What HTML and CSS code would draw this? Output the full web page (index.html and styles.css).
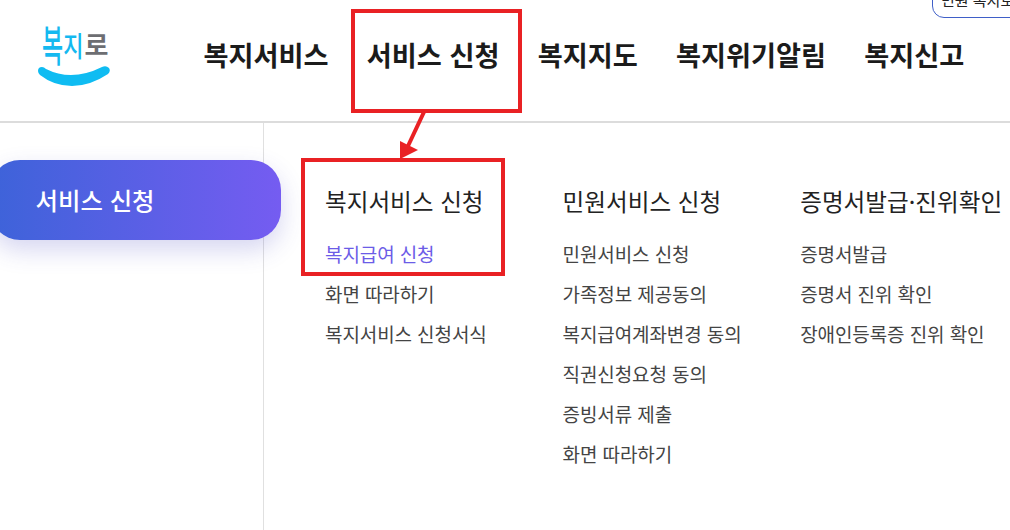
FILE: index.html
```html
<!DOCTYPE html>
<html lang="ko">
<head>
<meta charset="utf-8">
<title>복지로</title>
<link rel="stylesheet" href="styles.css">
</head>
<body>
<div class="page">
  <header class="header">
    <a class="logo">
      <span class="logo-text"><span class="logo-a">복</span><span class="logo-b">지</span><span class="logo-c">로</span></span>
      <svg class="logo-smile" width="76" height="22" viewBox="0 0 76 22"><path d="M2 5Q2 1 6 1Q8 1 10 3Q36 16 66 1Q70 -1 73 2Q75 5 72 8Q54 20 36 20Q18 20 4 9Q2 7 2 5Z" fill="#0fbcf2"/></svg>
    </a>
    <nav class="gnb">
      <a>복지서비스</a><a>서비스 신청</a><a>복지지도</a><a>복지위기알림</a><a>복지신고</a>
    </nav>
    <div class="top-btn">민원 복지로</div>
  </header>
  <main class="body">
    <aside class="side">
      <div class="pill">서비스 신청</div>
    </aside>
    <section class="cols">
      <div class="col">
        <h3>복지서비스 신청</h3>
        <ul><li class="on">복지급여 신청</li><li>화면 따라하기</li><li>복지서비스 신청서식</li></ul>
      </div>
      <div class="col">
        <h3>민원서비스 신청</h3>
        <ul><li>민원서비스 신청</li><li>가족정보 제공동의</li><li>복지급여계좌변경 동의</li><li>직권신청요청 동의</li><li>증빙서류 제출</li><li>화면 따라하기</li></ul>
      </div>
      <div class="col">
        <h3>증명서발급·진위확인</h3>
        <ul><li>증명서발급</li><li>증명서 진위 확인</li><li>장애인등록증 진위 확인</li></ul>
      </div>
    </section>
  </main>
  <div class="mark mark-nav"></div>
  <div class="mark mark-sub"></div>
  <svg class="mark-arrow" width="40" height="50" viewBox="0 0 40 50"><path d="M33 0L17 34" stroke="#e92124" stroke-width="4" fill="none"/><path d="M9 47L9 29L27 38Z" fill="#e92124"/></svg>
</div>
</body>
</html>
```
FILE: styles.css
```css
* { box-sizing: border-box; }
html, body { margin: 0; padding: 0; background: #fff; }
body { font-family: "Noto Sans CJK KR", "Noto Sans", sans-serif; color: #222; overflow: hidden; }
.page { position: relative; width: 1010px; height: 530px; overflow: hidden; }
.header { position: relative; display: flex; height: 123px; border-bottom: 2px solid #dcdcdc; }
.logo { position: relative; display: block; width: 203.5px; flex: none; }
.logo-text { position: absolute; left: 42px; top: 22px; display: flex; align-items: center; height: 44px; white-space: nowrap; font-weight: 500; }
.logo-a { color: #14b9f0; font-size: 23px; line-height: 44px; transform: translateY(-1px) scaleY(1.9); }
.logo-b { color: #14b9f0; font-size: 22px; line-height: 44px; transform: scaleY(1.3); }
.logo-c { color: #6d6e72; font-size: 26px; font-weight: 700; line-height: 44px; margin-left: 1px; }
.logo-smile { position: absolute; left: 36px; top: 66px; }
.gnb { display: flex; gap: 38.2px; height: 108px; align-items: center; }
.gnb a { font-size: 27.2px; font-weight: 700; color: #1b1b1b; white-space: nowrap; }
.top-btn { position: absolute; left: 932px; top: -18px; width: 100px; height: 36px; border: 1px solid #3f5fc8; border-radius: 12px; font-size: 15px; line-height: 33px; text-align: left; padding-left: 8px; white-space: nowrap; }
.body { display: flex; height: 407px; }
.side { width: 264px; flex: none; border-right: 1px solid #e0e0e0; padding-top: 37px; }
.pill { position: relative; width: 291px; height: 80px; margin-left: -10px; border-radius: 30px; padding-left: 45.5px; line-height: 80px; background: linear-gradient(90deg, #3d63d9, #755cf1); color: #fff; font-size: 24.4px; font-weight: 500; box-shadow: 0 10px 24px rgba(70, 70, 190, .22); }
.cols { display: flex; padding: 58px 0 0 61px; }
.col { width: 237.6px; flex: none; }
.col h3 { margin: 0; font-size: 23.6px; line-height: 40px; font-weight: 400; color: #222; white-space: nowrap; }
.col ul { list-style: none; margin: 13px 0 0; padding: 0; }
.col li { font-size: 19px; line-height: 40px; color: #444; white-space: nowrap; letter-spacing: -.1px; }
.col li.on { color: #6c5ce7; }
.mark { position: absolute; border: 4px solid #e92124; }
.mark-nav { left: 351px; top: 9px; width: 171px; height: 104px; }
.mark-sub { left: 301px; top: 158px; width: 204px; height: 118px; }
.mark-arrow { position: absolute; left: 391px; top: 112px; }
```
